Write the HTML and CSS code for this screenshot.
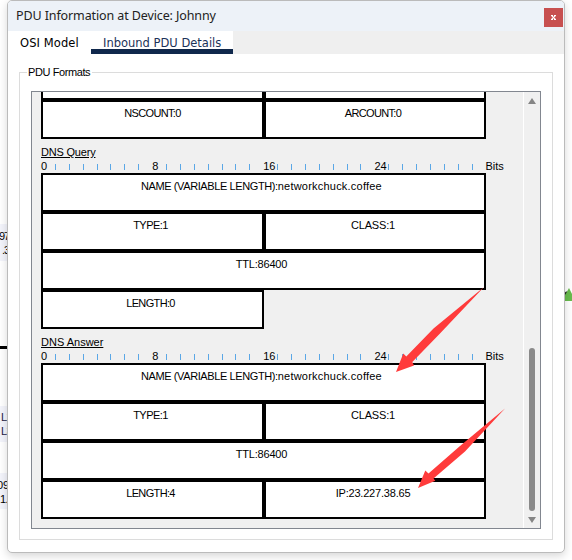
FILE: index.html
```
<!DOCTYPE html>
<html lang="en">
<head>
<meta charset="utf-8">
<title>PDU Information</title>
<link rel="stylesheet" href="styles.css">
</head>
<body>
<div class="canvas">
  <div class="node n1">97<br>&nbsp;.3</div>
  <div class="wire"></div>
  <div class="node n2">L2<br>L3</div>
  <div class="node n3">09<br><span class="digit">1.</span></div>
  <svg class="link" width="8" height="14" viewBox="0 0 8 14"><path d="M0 7l3-3" stroke="#222" stroke-width="2"/><path d="M0 13V9L5 0l3 6v7z" fill="#68bb4d"/></svg>
</div>
<main class="window">
  <header class="titlebar"><h1>PDU Information at Device: Johnny</h1><button class="close" aria-label="Close"><svg width="5" height="5" viewBox="0 0 5 5"><path d="M0 .5h2M3 .5h2M0 4.5h2M3 4.5h2M.8 1l3.4 3M4.2 1L.8 4" stroke="#fff" stroke-width="1.1"/></svg></button></header>
  <nav class="tabs"><span class="tab">OSI Model</span><span class="tab active">Inbound PDU Details</span></nav>
  <section class="group">
    <h2>PDU Formats</h2>
    <div class="scroller">
      <div class="content">
        <div class="row partial"><div class="cell half"></div><div class="cell rest"></div></div>
        <div class="row"><div class="cell half count">NSCOUNT:0</div><div class="cell rest count shifted">ARCOUNT:0</div></div>
        <h3 class="query">DNS Query</h3>
        <div class="ruler"></div>
        <div class="row"><div class="cell full shifted"><span class="caps">NAME (VARIABLE LENGTH):</span><span class="host">networkchuck.coffee</span></div></div>
        <div class="row"><div class="cell half type shifted">TYPE:1</div><div class="cell rest class shifted">CLASS:1</div></div>
        <div class="row"><div class="cell full class shifted">TTL:86400</div></div>
        <div class="row"><div class="cell half length shifted">LENGTH:0</div></div>
        <h3>DNS Answer</h3>
        <div class="ruler"></div>
        <div class="row"><div class="cell full shifted"><span class="caps">NAME (VARIABLE LENGTH):</span><span class="host">networkchuck.coffee</span></div></div>
        <div class="row"><div class="cell half type shifted">TYPE:1</div><div class="cell rest class shifted">CLASS:1</div></div>
        <div class="row"><div class="cell full class shifted">TTL:86400</div></div>
        <div class="row"><div class="cell half length shifted">LENGTH:4</div><div class="cell rest class shifted">IP:23.227.38.65</div></div>
      </div>
      <div class="scrollbar"><i class="up"></i><i class="thumb"></i><i class="down"></i></div>
    </div>
  </section>
</main>
<svg class="arrows" width="572" height="560" viewBox="0 0 572 560" fill="#ff3b3b">
  <path d="M396 372L403.3 353.5L406.3 356.5L433.5 328.5L484 287L439.5 334L412.3 362L414 365.5Z"/>
  <path d="M418 488L425.3 470.5L428.5 473.5L460 446L505 408.5L465 451.5L433.5 478.5L435.3 480.7Z"/>
</svg>
<script src="ruler.js"></script>
</body>
</html>
```
FILE: ruler.js
```
document.querySelectorAll('.ruler').forEach(function (ruler) {
  for (var bit = 0; bit < 32; bit++) {
    var mark = document.createElement('span');
    mark.className = bit % 8 ? 'tick' : 'number';
    if (bit % 8 === 0) mark.textContent = bit;
    ruler.appendChild(mark);
  }
  var unit = document.createElement('span');
  unit.className = 'unit';
  unit.textContent = 'Bits';
  ruler.appendChild(unit);
});
```
FILE: styles.css
```
* { box-sizing: border-box; }
body { margin: 0; width: 572px; height: 560px; overflow: hidden; position: relative; background: #fff; color: #000; font: 11px/13px "Liberation Sans", Arial, sans-serif; }
h1, h2, h3 { margin: 0; font-weight: normal; font-size: inherit; }
.canvas { position: absolute; inset: 0; }
.node { position: absolute; left: 0; width: 8px; overflow: hidden; white-space: nowrap; background: #f3f4fb; line-height: 14px; }
.n1 { top: 224px; height: 37px; padding-top: 5px; text-indent: -1px; letter-spacing: -1px; }
.n2 { top: 406px; height: 36px; padding: 4px 0 0 1px; color: #224; letter-spacing: -.5px; }
.n3 { top: 473px; height: 36px; padding-top: 5px; text-indent: -3px; }
.digit { letter-spacing: -.5px; }
.wire { position: absolute; left: 0; top: 346px; width: 8px; height: 3px; background: #000; }
.link { position: absolute; left: 564px; top: 288px; }
.window { position: relative; margin-left: 7px; width: 558px; height: 553px; border: 1px solid #bbb; border-radius: 5px; background: #fff; box-shadow: 0 3px 9px rgba(0,0,0,.16); }
.titlebar { height: 30px; padding: 0 1px 0 8px; display: flex; justify-content: space-between; background: #edf2f8; border-radius: 4px 4px 0 0; }
.titlebar h1 { font: 12.5px/29px "Noto Sans", "Open Sans", sans-serif; letter-spacing: -.11px; color: #222; }
.close { width: 19px; height: 19px; margin-top: 7px; padding: 0; border: 0; background: #c75050; display: flex; align-items: center; justify-content: center; }
.tabs { display: flex; height: 23px; background: #efefef; font: 11.5px/24px "DejaVu Sans", Verdana, sans-serif; }
.tab { width: 83px; padding-left: 12px; background: #fff; white-space: nowrap; letter-spacing: .1px; }
.tab.active { width: 142px; color: #1b3258; border-bottom: 5px solid #10284c; letter-spacing: 0; }
.group { margin: 18px 11px 0; height: 468px; border: 1px solid #dcdcdc; padding: 0 11px; }
.group h2 { width: 65px; height: 13px; margin: -7px 0 12px -4px; padding-left: 1px; background: #fff; letter-spacing: -.4px; white-space: nowrap; }
.scroller { display: flex; width: 510px; height: 438px; border: 1px solid #828790; background: #f0f0f0; overflow: hidden; }
.content { flex: 1; padding-left: 9px; }
.row { display: flex; height: 39px; }
.row.partial { height: 8px; align-items: flex-end; overflow: hidden; }
.cell { flex: none; height: 39px; border: 2px solid #000; background: #fff; padding-top: 5px; text-align: center; white-space: nowrap; }
.shifted { padding-right: 4px; }
.half { width: 223px; }
.rest { width: 222px; }
.full { width: 445px; }
.count { letter-spacing: -.65px; }
.length { letter-spacing: -.65px; }
.type { letter-spacing: -.55px; }
.class { letter-spacing: -.2px; }
.caps { letter-spacing: -.4px; }
.host { letter-spacing: .22px; }
h3 { height: 13px; margin-top: 7px; text-decoration: underline; }
h3.query { letter-spacing: -.2px; }
.ruler { display: flex; height: 14px; line-height: 14px; white-space: nowrap; }
.ruler span { width: 13.9px; flex: none; }
.ruler .unit { width: auto; }
.ruler .tick { height: 6px; margin-top: 5px; border-left: 1px solid #5aa7e6; }
.scrollbar { width: 17px; border-left: 1px solid #fff; display: flex; flex-direction: column; align-items: center; }
.scrollbar i { flex: none; }
.up, .down { width: 0; height: 0; border: solid transparent; border-width: 0 4px 6px; border-bottom-color: #858585; margin-top: 6px; }
.thumb { width: 6px; height: 163px; margin-top: 244px; border-radius: 3px; background: #8a8a8a; }
.down { border-width: 6px 4px 0; border-top-color: #858585; }
.arrows { position: absolute; left: 0; top: 0; }
```
